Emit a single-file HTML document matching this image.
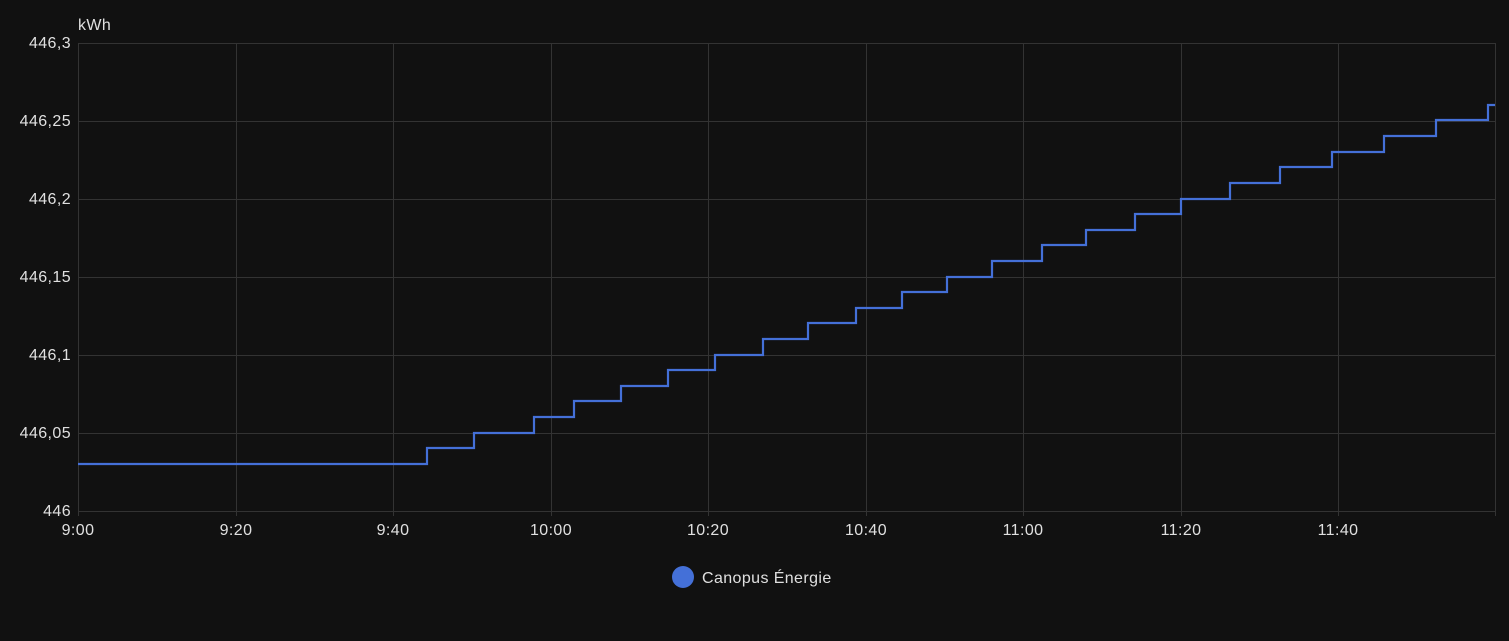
<!DOCTYPE html><html><head><style>html,body{margin:0;background:#111111;width:1509px;height:641px;overflow:hidden}</style></head><body>
<svg width="1509" height="641" xmlns="http://www.w3.org/2000/svg" font-family="Liberation Sans, sans-serif" font-size="16" fill="#e0e0e0" letter-spacing="0.4">
<g stroke="#333" stroke-width="1">
<line x1="78" y1="43.5" x2="1495" y2="43.5"/><line x1="78" y1="121.5" x2="1495" y2="121.5"/><line x1="78" y1="199.5" x2="1495" y2="199.5"/><line x1="78" y1="277.5" x2="1495" y2="277.5"/><line x1="78" y1="355.5" x2="1495" y2="355.5"/><line x1="78" y1="433.5" x2="1495" y2="433.5"/><line x1="78" y1="511.5" x2="1495" y2="511.5"/>
<line x1="78.5" y1="43" x2="78.5" y2="516"/><line x1="236.5" y1="43" x2="236.5" y2="516"/><line x1="393.5" y1="43" x2="393.5" y2="516"/><line x1="551.5" y1="43" x2="551.5" y2="516"/><line x1="708.5" y1="43" x2="708.5" y2="516"/><line x1="866.5" y1="43" x2="866.5" y2="516"/><line x1="1023.5" y1="43" x2="1023.5" y2="516"/><line x1="1181.5" y1="43" x2="1181.5" y2="516"/><line x1="1338.5" y1="43" x2="1338.5" y2="516"/><line x1="1495.5" y1="43" x2="1495.5" y2="516"/>
</g>
<polyline fill="none" stroke="#4470d8" stroke-width="2.2" points="78,464 427,464 427,448 474,448 474,433 534,433 534,417 574,417 574,401 621,401 621,386 668,386 668,370 715,370 715,355 763,355 763,339 808,339 808,323 856,323 856,308 902,308 902,292 947,292 947,277 992,277 992,261 1042,261 1042,245 1086,245 1086,230 1135,230 1135,214 1181,214 1181,199 1230,199 1230,183 1280,183 1280,167 1332,167 1332,152 1384,152 1384,136 1436,136 1436,120 1488,120 1488,105 1495,105"/>
<text x="78" y="30">kWh</text>
<g text-anchor="end">
<text x="71" y="48">446,3</text><text x="71" y="126">446,25</text><text x="71" y="204">446,2</text><text x="71" y="282">446,15</text><text x="71" y="360">446,1</text><text x="71" y="438">446,05</text><text x="71" y="516">446</text>
</g>
<g text-anchor="middle">
<text x="78" y="535">9:00</text><text x="236" y="535">9:20</text><text x="393" y="535">9:40</text><text x="551" y="535">10:00</text><text x="708" y="535">10:20</text><text x="866" y="535">10:40</text><text x="1023" y="535">11:00</text><text x="1181" y="535">11:20</text><text x="1338" y="535">11:40</text>
</g>
<circle cx="683" cy="577" r="11" fill="#4470d8"/>
<text x="702" y="583">Canopus Énergie</text>
</svg>
</body></html>
